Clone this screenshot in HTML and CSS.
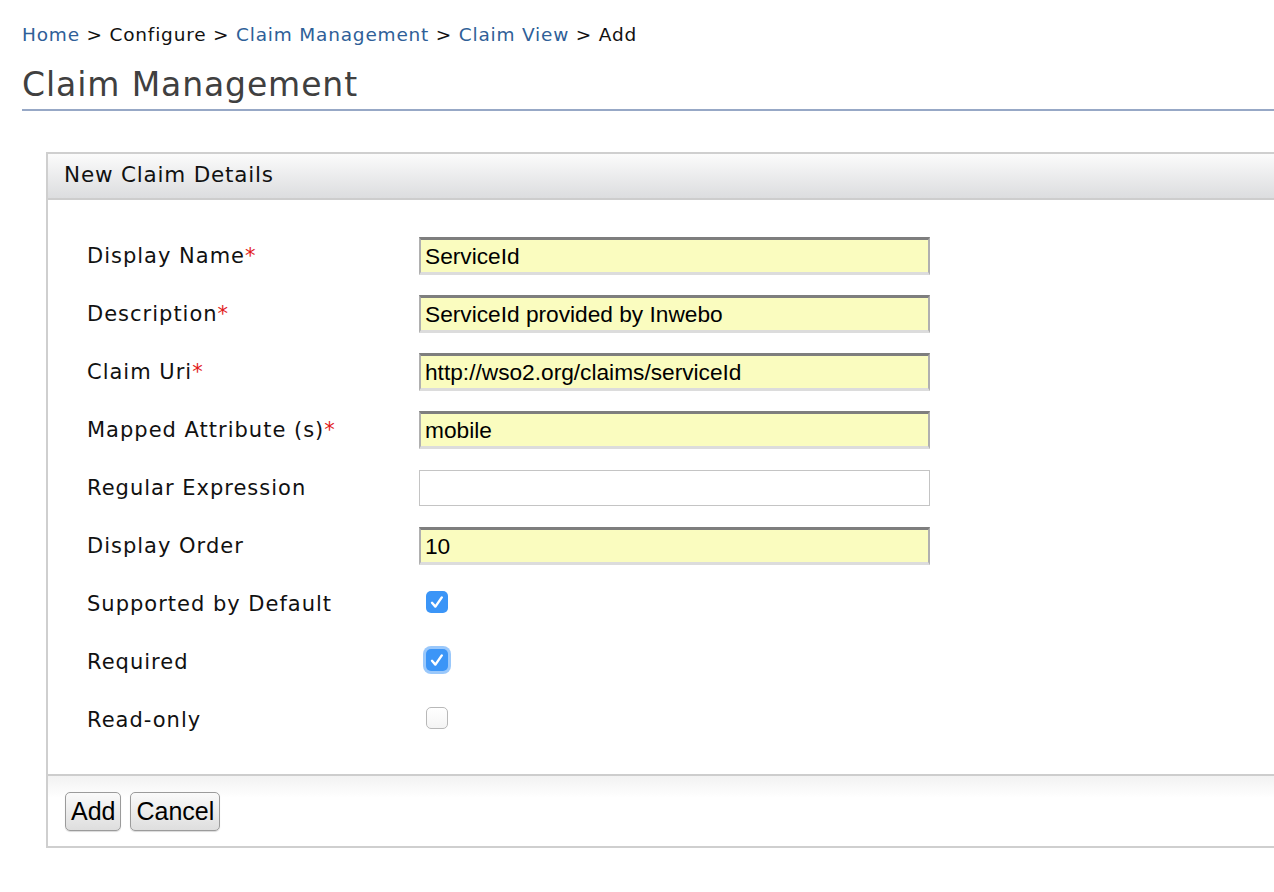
FILE: index.html
```html
<!DOCTYPE html>
<html>
<head>
<meta charset="utf-8">
<link rel="stylesheet" href="styles.css">
</head>
<body>
<div class="page">
  <div class="breadcrumb">
    <a href="#">Home</a> &gt; Configure &gt; <a href="#">Claim Management</a> &gt; <a href="#">Claim View</a> &gt; Add
  </div>
  <h1 class="title">Claim Management</h1>
  <div class="panel">
    <div class="panel-head">New Claim Details</div>
    <div class="panel-body">
      <div class="form-grid">
        <label class="lbl">Display Name<span class="req">*</span></label>
        <div class="field"><input class="txt hl" type="text" value="ServiceId"></div>
        <label class="lbl">Description<span class="req">*</span></label>
        <div class="field"><input class="txt hl" type="text" value="ServiceId provided by Inwebo"></div>
        <label class="lbl">Claim Uri<span class="req">*</span></label>
        <div class="field"><input class="txt hl" type="text" value="http://wso2.org/claims/serviceId"></div>
        <label class="lbl">Mapped Attribute (s)<span class="req">*</span></label>
        <div class="field"><input class="txt hl" type="text" value="mobile"></div>
        <label class="lbl">Regular Expression</label>
        <div class="field"><input class="txt plain" type="text" value=""></div>
        <label class="lbl">Display Order</label>
        <div class="field"><input class="txt hl" type="text" value="10"></div>
        <label class="lbl">Supported by Default</label>
        <div class="field"><span class="cb on"><svg viewBox="0 0 22 22" width="22" height="22"><path d="M6 11.8 L9.4 15.6 L15.8 6.4" fill="none" stroke="#fff" stroke-width="2.4" stroke-linecap="round" stroke-linejoin="round"/></svg></span></div>
        <label class="lbl">Required</label>
        <div class="field"><span class="cb on focus"><svg viewBox="0 0 22 22" width="22" height="22"><path d="M6 11.8 L9.4 15.6 L15.8 6.4" fill="none" stroke="#fff" stroke-width="2.4" stroke-linecap="round" stroke-linejoin="round"/></svg></span></div>
        <label class="lbl">Read-only</label>
        <div class="field"><span class="cb off"></span></div>
      </div>
    </div>
    <div class="panel-foot">
      <button class="btn">Add</button>
      <button class="btn">Cancel</button>
    </div>
  </div>
</div>
</body>
</html>
```

FILE: styles.css
```css
html, body {
  margin: 0;
  padding: 0;
  background: #fff;
  overflow: hidden;
}
.page {
  padding: 22px 0 0 22px;
  font-family: "DejaVu Sans", "Lucida Grande", sans-serif;
  color: #111;
}
.breadcrumb {
  font-size: 18.5px;
  line-height: 26px;
  letter-spacing: 0.8px;
  color: #111;
}
.breadcrumb a {
  color: #2f5f98;
  text-decoration: none;
}
.title {
  margin: 18px 0 0 0;
  font-size: 33px;
  font-weight: normal;
  letter-spacing: 0.9px;
  color: #404040;
  line-height: 38px;
  padding-bottom: 5px;
  border-bottom: 2px solid #97a8c6;
}
.panel {
  margin: 41px 0 0 24px;
  border: 2px solid #cfcfcf;
  border-right: none;
}
.panel-head {
  height: 44px;
  line-height: 42px;
  padding-left: 16px;
  font-size: 21.5px;
  letter-spacing: 0.8px;
  color: #111;
  background: linear-gradient(#fbfbfb, #dcdddf);
  border-bottom: 2px solid #cdcdcd;
}
.panel-body {
  padding: 37px 0 35px 39px;
}
.form-grid {
  display: grid;
  grid-template-columns: 332px 511px;
  grid-auto-rows: 38px;
  row-gap: 20px;
  align-items: center;
}
.lbl {
  font-size: 21px;
  letter-spacing: 1px;
  color: #111;
}
.req {
  color: #e21a1a;
  letter-spacing: 0;
}
.field {
  display: flex;
  align-items: center;
}
.txt {
  box-sizing: border-box;
  width: 511px;
  height: 38px;
  padding: 0 4px;
  font-family: "Liberation Sans", Arial, sans-serif;
  font-size: 22.7px;
  color: #000;
  outline: none;
}
.txt.hl {
  background: #fafcbf;
  border-top: 3px solid #7e7e7e;
  border-left: 2px solid #b0b0b0;
  border-right: 2px solid #b0b0b0;
  border-bottom: 3px solid #dcdcdc;
}
.txt.plain {
  height: 36px;
  background: #fff;
  border: 1px solid #c4c4c4;
}
.cb {
  box-sizing: border-box;
  display: inline-block;
  width: 22px;
  height: 22px;
  margin: -4px 0 0 7px;
  border-radius: 5px;
}
.cb svg { display: block; }
.cb.on {
  background: #3b95f7;
  border: none;
}
.cb.focus {
  box-shadow: 0 0 0 3px #9ac8fb;
}
.cb.off {
  background: linear-gradient(#fff, #f4f4f4);
  border: 1px solid #b8b8b8;
}
.panel-foot {
  border-top: 2px solid #cdcdcd;
  background: linear-gradient(#f2f2f2, #fff 22px);
  padding: 16px 0 15px 17px;
  display: flex;
  gap: 9px;
}
.btn {
  height: 39px;
  padding: 0 5px;
  font-family: "Liberation Sans", Arial, sans-serif;
  font-size: 25px;
  color: #000;
  background: linear-gradient(#fafafa, #dedede);
  border: 1px solid #9b9b9b;
  border-radius: 5px;
  box-shadow: 0 1px 1px rgba(0,0,0,0.15);
}
```
